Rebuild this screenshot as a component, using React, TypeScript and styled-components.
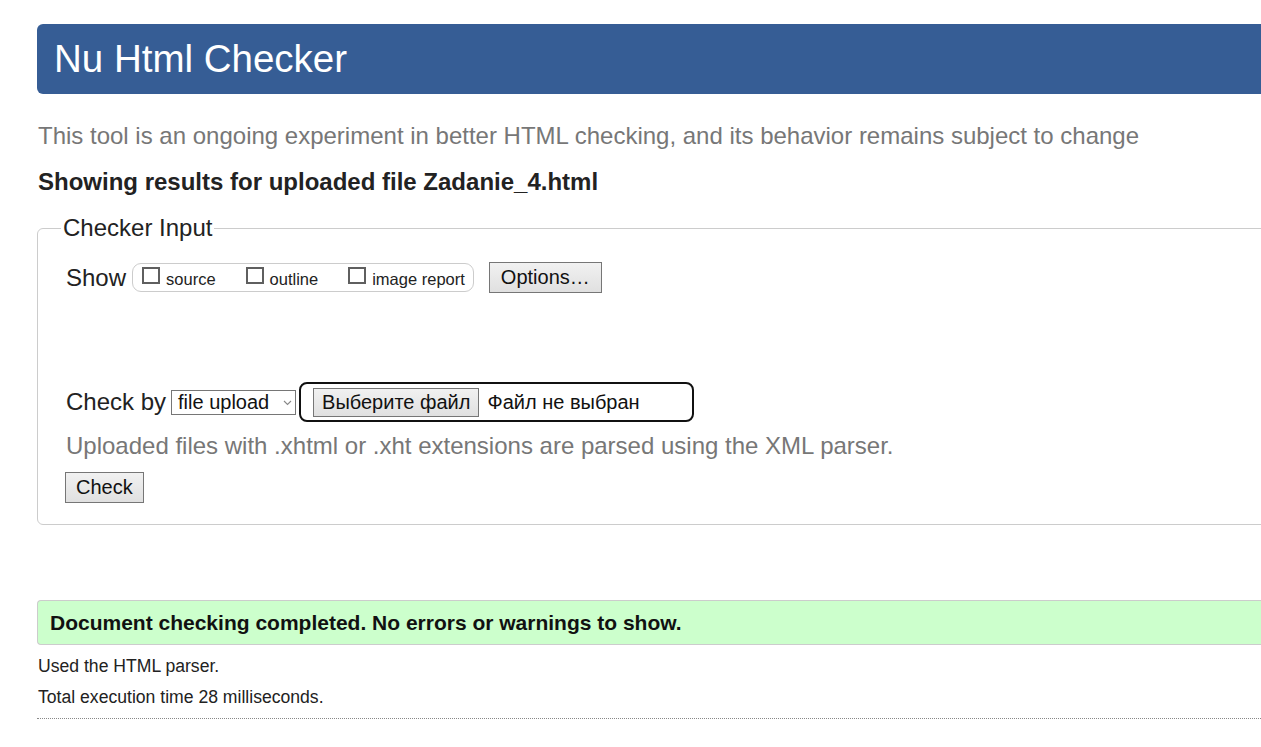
import React from "react";
import styled, { createGlobalStyle } from "styled-components";

const Global = createGlobalStyle`
  html, body { margin: 0; padding: 0; background: #fff; overflow: hidden; }
  body { font-family: "Liberation Sans", Arial, sans-serif; color: #222; }
`;

const Page = styled.div`
  width: 1300px;
  padding: 24px 0 0 37px;
  display: flex;
  flex-direction: column;
`;

const Header = styled.h1`
  margin: 0;
  height: 70px;
  background: #365d95;
  border-radius: 6px 0 0 6px;
  color: #fff;
  font-weight: normal;
  font-size: 38.5px;
  display: flex;
  align-items: center;
  padding: 0 0 0 17px;
`;

const Subtitle = styled.p`
  margin: 28px 0 0 1px;
  color: #777;
  font-size: 24px;
  line-height: 28px;
`;

const Results = styled.h2`
  margin: 18px 0 0 1px;
  font-size: 24px;
  line-height: 28px;
  font-weight: bold;
  color: #222;
`;

const Fieldset = styled.fieldset`
  margin: 18px 0 0 0;
  border: 1px solid #ccc;
  border-radius: 6px;
  padding: 8px 28px 21px 28px;
  display: flex;
  flex-direction: column;
`;

const Legend = styled.legend`
  font-size: 24px;
  line-height: 28px;
  padding: 0 2px;
  margin-left: -5px;
  color: #222;
`;

const Row = styled.div<{ $mt?: number }>`
  display: flex;
  align-items: center;
  margin-top: ${(p) => p.$mt ?? 0}px;
`;

const Label = styled.span`
  font-size: 24px;
  line-height: 28px;
  margin-right: 6px;
`;

const Pill = styled.div`
  display: flex;
  align-items: center;
  height: 27px;
  border: 1px solid #ccc;
  border-radius: 9px;
  padding: 0 8px 0 9px;
  gap: 30px;
`;

const CheckLabel = styled.label`
  display: flex;
  align-items: center;
  font-size: 16.5px;
  color: #222;
  padding-top: 3px;
`;

const Box = styled.span`
  width: 18px;
  height: 17px;
  border: 2px solid #5f5f5f;
  margin: -8px 6px 0 0;
  box-sizing: border-box;
`;

const Button = styled.button`
  font-family: "Liberation Sans", Arial, sans-serif;
  font-size: 20px;
  color: #111;
  background: linear-gradient(#f1f1f1, #e0e0e0);
  border: 1px solid #767676;
  border-radius: 0;
  height: 31px;
  padding: 0 11px;
  margin: 0;
`;

const OptionsButton = styled(Button)`
  margin-left: 15px;
`;

const Select = styled.div`
  display: flex;
  align-items: center;
  justify-content: space-between;
  width: 125px;
  height: 25px;
  box-sizing: border-box;
  border: 1px solid #767676;
  font-size: 20px;
  color: #111;
  padding: 0 3px 0 6px;
  margin-left: -1px;
`;

const FileWrap = styled.div`
  display: flex;
  align-items: center;
  width: 395px;
  height: 40px;
  box-sizing: border-box;
  border: 2px solid #111;
  border-radius: 8px;
  margin-left: 3px;
  padding: 0 12px;
  gap: 8px;
`;

const FileButton = styled(Button)`
  height: 29px;
  padding: 0 8px;
`;

const FileName = styled.span`
  font-size: 20px;
  color: #111;
`;

const Hint = styled.p`
  margin: 10px 0 0 0;
  color: #777;
  font-size: 24px;
  line-height: 28px;
`;

const CheckButton = styled(Button)`
  align-self: flex-start;
  margin-top: 12px;
  margin-left: -1px;
  padding: 0 10px;
`;

const Success = styled.div`
  margin-top: 75px;
  height: 45px;
  box-sizing: border-box;
  background: #ccffcc;
  border: 1px solid #ccc;
  border-right: none;
  border-radius: 4px 0 0 4px;
  display: flex;
  align-items: center;
  padding-left: 12px;
  font-size: 21px;
  font-weight: bold;
  color: #111;
`;

const Info = styled.p<{ $mt: number }>`
  margin: ${(p) => p.$mt}px 0 0 1px;
  font-size: 17.6px;
  line-height: 20px;
  color: #222;
`;

const Rule = styled.hr`
  margin: 11px 0 0 0;
  border: none;
  border-top: 1px dotted #888;
`;

const Chevron = () => (
  <svg width="9" height="6" viewBox="0 0 9 6" style={{ marginTop: 2 }}>
    <path d="M1 1 L4.5 4.5 L8 1" fill="none" stroke="#888" strokeWidth="1.1" />
  </svg>
);

export default function App() {
  return (
    <>
      <Global />
      <Page>
        <Header>Nu Html Checker</Header>
        <Subtitle>
          This tool is an ongoing experiment in better HTML checking, and its behavior remains subject to change
        </Subtitle>
        <Results>Showing results for uploaded file Zadanie_4.html</Results>
        <Fieldset>
          <Legend>Checker Input</Legend>
          <Row $mt={12}>
            <Label>Show</Label>
            <Pill>
              <CheckLabel>
                <Box />
                source
              </CheckLabel>
              <CheckLabel>
                <Box />
                outline
              </CheckLabel>
              <CheckLabel>
                <Box />
                image report
              </CheckLabel>
            </Pill>
            <OptionsButton>Options…</OptionsButton>
          </Row>
          <Row $mt={89}>
            <Label>Check by</Label>
            <Select>
              <span>file upload</span>
              <Chevron />
            </Select>
            <FileWrap>
              <FileButton>Выберите файл</FileButton>
              <FileName>Файл не выбран</FileName>
            </FileWrap>
          </Row>
          <Hint>Uploaded files with .xhtml or .xht extensions are parsed using the XML parser.</Hint>
          <CheckButton>Check</CheckButton>
        </Fieldset>
        <Success>Document checking completed. No errors or warnings to show.</Success>
        <Info $mt={11}>Used the HTML parser.</Info>
        <Info $mt={11}>Total execution time 28 milliseconds.</Info>
        <Rule />
      </Page>
    </>
  );
}
